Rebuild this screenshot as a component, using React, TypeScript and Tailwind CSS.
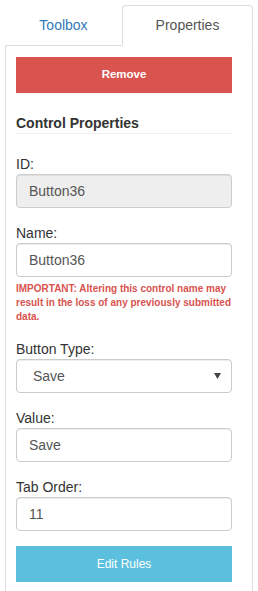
import React from 'react';

const Label = ({ children }: { children: React.ReactNode }) => (
  <label className="block text-[14px] leading-[20px] text-[#333]">{children}</label>
);

const Field = ({ value, disabled }: { value: string; disabled?: boolean }) => (
  <div
    className={`h-[34px] flex items-center px-[12px] border border-[#ccc] rounded-[4px] text-[14px] text-[#555] shadow-[inset_0_1px_1px_rgba(0,0,0,0.075)] ${
      disabled ? 'bg-[#eee]' : 'bg-white'
    }`}
  >
    {value}
  </div>
);

const App = () => {
  return (
    <div className="w-[258px] h-[591px] overflow-hidden bg-white font-['Liberation_Sans',Arial,sans-serif]">
      <div className="pt-[5px] pl-[5px] w-[253px]">
        {/* Tabs */}
        <div className="flex border-b border-[#ddd]">
          <div className="w-[117px] h-[40px] flex items-center justify-center text-[14px] text-[#337ab7]">
            Toolbox
          </div>
          <div className="flex-1 h-[41px] -mb-px flex items-center justify-center bg-white border border-[#ddd] border-b-transparent rounded-t-[4px] text-[14px] text-[#555]">
            Properties
          </div>
        </div>

        {/* Panel */}
        <div className="border-l border-r border-[#ddd] pl-[10px] pr-[20px] pt-[11px] pb-[20px]">
          <button className="w-full h-[36px] bg-[#d9534f] text-white text-[11.5px] font-bold">
            Remove
          </button>

          <h4 className="mt-[20px] text-[14px] leading-[20px] font-bold text-[#333] border-b border-[#eee]">
            Control Properties
          </h4>

          <div className="mt-[20px] mb-[15px]">
            <Label>ID:</Label>
            <Field value="Button36" disabled />
          </div>

          <div className="mb-[15px]">
            <Label>Name:</Label>
            <Field value="Button36" />
            <p className="mt-[5px] text-[10px] leading-[14px] font-bold text-[#d9534f]">
              IMPORTANT: Altering this control name may result in the loss of any previously submitted data.
            </p>
          </div>

          <div className="mb-[15px]">
            <Label>Button Type:</Label>
            <div className="h-[34px] flex items-center justify-between pl-[16px] pr-[10px] border border-[#ccc] rounded-[4px] bg-white text-[14px] text-[#555] shadow-[inset_0_1px_1px_rgba(0,0,0,0.075)]">
              <span>Save</span>
              <svg width="7" height="6" viewBox="0 0 7 6">
                <polygon points="0,0 7,0 3.5,6" fill="#444" />
              </svg>
            </div>
          </div>

          <div className="mb-[15px]">
            <Label>Value:</Label>
            <Field value="Save" />
          </div>

          <div className="mb-[15px]">
            <Label>Tab Order:</Label>
            <Field value="11" />
          </div>

          <button className="w-full h-[36px] bg-[#5bc0de] text-white text-[12px]">
            Edit Rules
          </button>
        </div>
      </div>
    </div>
  );
};

export default App;
